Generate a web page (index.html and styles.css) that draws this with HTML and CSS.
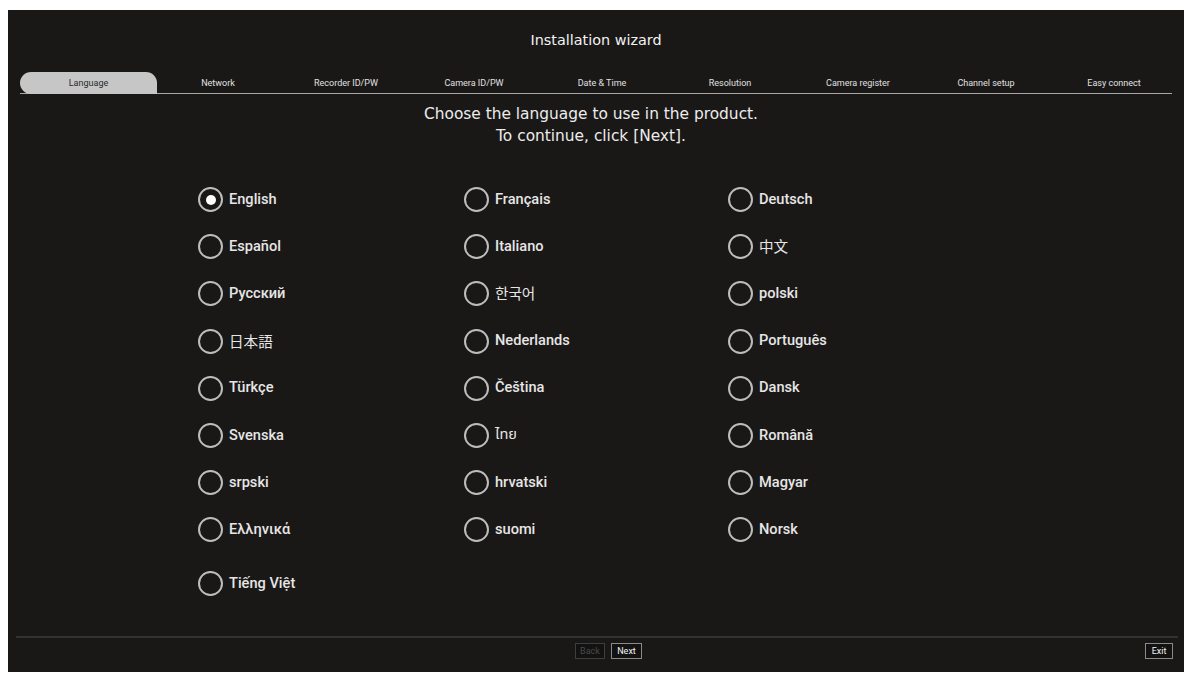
FILE: index.html
```html
<!DOCTYPE html>
<html lang="en">
<head>
<meta charset="utf-8">
<title>Installation wizard</title>
<link rel="stylesheet" href="styles.css">
</head>
<body>
<div class="panel">
  <div class="title">Installation wizard</div>
  <div class="tabs">
    <div class="tab active">Language</div>
    <div class="tab first-rest">Network</div>
    <div class="tab">Recorder ID/PW</div>
    <div class="tab">Camera ID/PW</div>
    <div class="tab">Date &amp; Time</div>
    <div class="tab">Resolution</div>
    <div class="tab">Camera register</div>
    <div class="tab">Channel setup</div>
    <div class="tab">Easy connect</div>
  </div>
  <div class="intro">
    <div>Choose the language to use in the product.</div>
    <div>To continue, click [Next].</div>
  </div>
  <div class="langs">
    <label class="lang"><span class="radio checked"></span><span>English</span></label>
    <label class="lang"><span class="radio"></span><span>Français</span></label>
    <label class="lang"><span class="radio"></span><span>Deutsch</span></label>
    <label class="lang"><span class="radio"></span><span>Español</span></label>
    <label class="lang"><span class="radio"></span><span>Italiano</span></label>
    <label class="lang"><span class="radio"></span><span lang="zh">中文</span></label>
    <label class="lang"><span class="radio"></span><span>Русский</span></label>
    <label class="lang"><span class="radio"></span><span lang="ko">한국어</span></label>
    <label class="lang"><span class="radio"></span><span>polski</span></label>
    <label class="lang"><span class="radio"></span><span lang="ja">日本語</span></label>
    <label class="lang"><span class="radio"></span><span>Nederlands</span></label>
    <label class="lang"><span class="radio"></span><span>Português</span></label>
    <label class="lang"><span class="radio"></span><span>Türkçe</span></label>
    <label class="lang"><span class="radio"></span><span>Čeština</span></label>
    <label class="lang"><span class="radio"></span><span>Dansk</span></label>
    <label class="lang"><span class="radio"></span><span>Svenska</span></label>
    <label class="lang"><span class="radio"></span><span lang="th">ไทย</span></label>
    <label class="lang"><span class="radio"></span><span>Română</span></label>
    <label class="lang"><span class="radio"></span><span>srpski</span></label>
    <label class="lang"><span class="radio"></span><span>hrvatski</span></label>
    <label class="lang"><span class="radio"></span><span>Magyar</span></label>
    <label class="lang"><span class="radio"></span><span>Ελληνικά</span></label>
    <label class="lang"><span class="radio"></span><span>suomi</span></label>
    <label class="lang"><span class="radio"></span><span>Norsk</span></label>
    <label class="lang last"><span class="radio"></span><span>Tiếng Việt</span></label>
  </div>
  <div class="footer">
    <div class="nav">
      <button class="btn disabled">Back</button>
      <button class="btn">Next</button>
    </div>
    <button class="btn exit">Exit</button>
  </div>
</div>
</body>
</html>
```
FILE: styles.css
```css
html, body {
  margin: 0;
  padding: 0;
  background: #ffffff;
}
body {
  padding: 10px 0 0 8px;
}
.panel {
  width: 1176px;
  height: 662px;
  background: #1a1817;
  display: flex;
  flex-direction: column;
  box-sizing: border-box;
  color: #e8e8e8;
  font-family: "Liberation Sans", "Noto Sans CJK SC", sans-serif;
}
.title {
  padding-top: 20px;
  height: 20px;
  line-height: 20px;
  text-align: center;
  font-family: "DejaVu Sans", sans-serif;
  font-size: 14.4px;
  color: #f2f2f2;
}
.tabs {
  margin: 22px 0 0 12px;
  width: 1152px;
  height: 21px;
  border-bottom: 1px solid #a8a8a8;
  display: flex;
}
.tab {
  flex: none;
  width: 128px;
  height: 20px;
  padding-top: 1px;
  line-height: 21px;
  text-align: center;
  font-family: "Roboto", "Liberation Sans", sans-serif;
  font-size: 9px;
  color: #e0e0e0;
}
.tab.active {
  width: 137px;
  height: 21px;
  line-height: 21px;
  margin-bottom: -1px;
  background: #c6c6c6;
  color: #2a2a2a;
  border-radius: 11px 11px 0 11px;
}
.tab.first-rest {
  margin-left: -3px;
}
.intro {
  margin-top: 9px;
  padding-right: 10px;
  text-align: center;
  font-family: "DejaVu Sans", sans-serif;
  font-size: 15.4px;
  line-height: 22px;
  color: #ececec;
}
.langs {
  margin: 29px 0 0 190px;
  display: grid;
  grid-template-columns: 266px 264px 266px;
  grid-auto-rows: 47.2px;
}
.lang {
  display: flex;
  align-items: center;
  gap: 6px;
  font-family: "Roboto", "Liberation Sans", "Noto Sans CJK SC", sans-serif;
  font-weight: 500;
  font-size: 14.6px;
  color: #e6e6e6;
}
.lang > span:last-child {
  margin-top: -2px;
}
.lang.last {
  margin-top: 13px;
}
.lang [lang="ko"] {
  font-family: "Noto Sans CJK KR", sans-serif;
  font-weight: 400;
}
.lang [lang="ja"] {
  font-family: "Noto Sans CJK JP", sans-serif;
  font-weight: 400;
}
.lang [lang="zh"] {
  font-family: "Noto Sans CJK SC", sans-serif;
  font-weight: 400;
}
.lang [lang="th"] {
  font-family: "Noto Sans Thai", "Noto Sans Thai Looped", "Liberation Sans", sans-serif;
  font-weight: 400;
}
.radio {
  flex: none;
  width: 21px;
  height: 21px;
  border: 2px solid #bdbdbd;
  border-radius: 50%;
  display: flex;
  align-items: center;
  justify-content: center;
}
.radio.checked::after {
  content: "";
  width: 10px;
  height: 10px;
  border-radius: 50%;
  background: #ffffff;
}
.footer {
  margin: auto 6px 0 8px;
  border-top: 2px solid #333231;
  padding: 5px 5px 13px 0;
  display: flex;
  align-items: flex-start;
}
.nav {
  margin-left: 559px;
  display: flex;
  gap: 6px;
}
.btn {
  height: 16px;
  padding: 0 4px;
  margin: 0;
  background: #121212;
  border: 1px solid #8a8a8a;
  color: #f2f2f2;
  font-family: "Roboto", "Liberation Sans", sans-serif;
  font-size: 9px;
  line-height: 14px;
  box-sizing: border-box;
}
.btn.disabled {
  border-color: #3e3e3e;
  color: #4a4a4a;
  width: 30px;
}
.nav .btn:not(.disabled) {
  width: 31px;
}
.exit {
  margin-left: auto;
  width: 28px;
}
```
